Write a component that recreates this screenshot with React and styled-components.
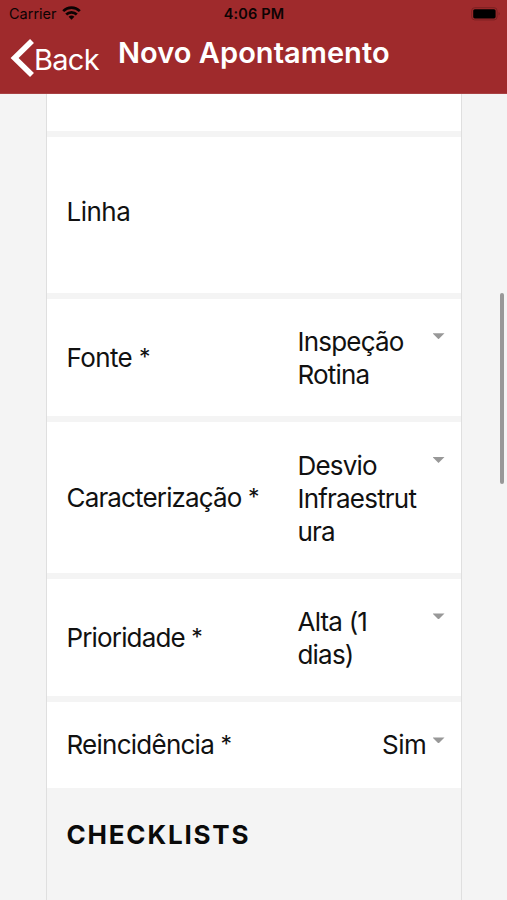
import styled, { createGlobalStyle } from "styled-components";

const fields = [
  { label: "Fonte", value: "Inspeção Rotina", height: 117.4, tracking: -0.6 },
  { label: "Caracterização", value: "Desvio Infraestrutura", height: 151, tracking: -0.85 },
  { label: "Prioridade", value: "Alta (1 dias)", height: 117, tracking: -0.85 },
];

const App = () => {
  return (
    <>
      <GlobalStyle />
      <Screen>
        <Header>
          <StatusBar>
            <Carrier>
              <span>Carrier</span>
              <WifiIcon />
            </Carrier>
            <Clock>4:06 PM</Clock>
            <Battery>
              <BatteryIcon />
            </Battery>
          </StatusBar>
          <NavBar>
            <BackButton type="button">
              <BackIcon />
              <span>Back</span>
            </BackButton>
            <Title>Novo Apontamento</Title>
          </NavBar>
        </Header>
        <Content>
          <Panel>
            <Row $height={37} />
            <Row $height={155.6} $bottom={7}>
              <Label>Linha</Label>
            </Row>
            {fields.map((field) => (
              <Row key={field.label} $height={field.height}>
                <Label $tracking={field.tracking}>
                  {field.label} <Required>*</Required>
                </Label>
                <Select>
                  <Value>{field.value}</Value>
                  <Arrow />
                </Select>
              </Row>
            ))}
            <Row $height={86}>
              <Label $tracking={-0.75}>
                Reincidência <Required>*</Required>
              </Label>
              <Select $compact>
                <Value $compact>Sim</Value>
                <Arrow />
              </Select>
            </Row>
            <SectionTitle>CHECKLISTS</SectionTitle>
          </Panel>
          <ScrollThumb />
        </Content>
      </Screen>
    </>
  );
};

export default App;

const WifiIcon = () => (
  <svg width="19" height="14" viewBox="0 0 19 14">
    <g fill="none" stroke="#0c0303" strokeWidth="2.7">
      <path d="M1.2 5.1a11.8 11.8 0 0 1 16.6 0" />
      <path d="M4.2 8.5a7.5 7.5 0 0 1 10.6 0" />
    </g>
    <path d="M6.6 10.8a4.2 4.2 0 0 1 5.8 0L9.5 13.8z" fill="#0c0303" />
  </svg>
);

const BatteryIcon = () => (
  <svg width="30" height="14" viewBox="0 0 30 14">
    <rect x="0.7" y="0.7" width="25.4" height="12.2" rx="3" fill="none" stroke="#7c2022" />
    <rect x="2.2" y="2.2" width="22.4" height="9.2" rx="1.6" fill="#000" />
    <path d="M27.6 5a2 2 0 0 1 0 3.6z" fill="#7c2022" />
  </svg>
);

const BackIcon = () => (
  <svg width="24" height="40" viewBox="0 0 24 40">
    <path d="M22 3L4.6 20 22 37" fill="none" stroke="#fff" strokeWidth="5.6" />
  </svg>
);

const GlobalStyle = createGlobalStyle`
  * {
    box-sizing: border-box;
  }
  body {
    margin: 0;
    background: #f4f4f4;
    font-family: Inter, "Liberation Sans", sans-serif;
  }
`;

const Screen = styled.div`
  height: 900px;
  display: flex;
  flex-direction: column;
  overflow: hidden;
`;

const Header = styled.header`
  flex: none;
  height: 94px;
  background: #9f2a2c;
  border-bottom: 1px solid #a84143;
`;

const StatusBar = styled.div`
  display: grid;
  grid-template-columns: 1fr auto 1fr;
  align-items: center;
  height: 27px;
  padding: 0 5px 0 9px;
  color: #0c0303;
`;

const Carrier = styled.div`
  display: flex;
  align-items: center;
  gap: 5px;
  font-size: 14.5px;
  letter-spacing: 0;
  svg {
    margin-top: -2px;
  }
`;

const Clock = styled.span`
  margin-left: -3px;
  font-size: 14.5px;
  font-weight: 600;
  letter-spacing: 0.15px;
`;

const Battery = styled.div`
  display: flex;
  justify-content: flex-end;
  margin-right: 1px;
`;

const NavBar = styled.div`
  display: flex;
  align-items: flex-start;
  padding-left: 10px;
`;

const BackButton = styled.button`
  display: flex;
  align-items: center;
  width: 108px;
  height: 40px;
  margin-top: 11px;
  padding: 0;
  border: 0;
  background: none;
  color: #fff;
  font-family: inherit;
  font-size: 29px;
  letter-spacing: -0.7px;
  span {
    margin-top: 3px;
  }
`;

const Title = styled.h1`
  margin: 8px 0 0;
  color: #fff;
  font-size: 29px;
  font-weight: 600;
  line-height: 36px;
  letter-spacing: 0.05px;
  white-space: nowrap;
`;

const Content = styled.main`
  position: relative;
  flex: 1;
  display: flex;
  justify-content: center;
`;

const Panel = styled.div`
  display: flex;
  flex-direction: column;
  gap: 6px;
  width: 416px;
  border: solid #dfdfdf;
  border-width: 0 1px;
`;

const Row = styled.div`
  flex: none;
  display: flex;
  align-items: center;
  justify-content: space-between;
  height: ${({ $height }) => $height}px;
  padding: 0 16px ${({ $bottom = 0 }) => $bottom}px 20px;
  background: #fff;
`;

const Label = styled.span`
  color: #111;
  font-size: 26px;
  line-height: 33px;
  letter-spacing: ${({ $tracking = -0.5 }) => $tracking}px;
  white-space: nowrap;
`;

const Required = styled.span`
  position: relative;
  top: -2px;
  font-size: 23px;
  line-height: 1;
`;

const Select = styled.div`
  display: flex;
  justify-content: space-between;
  width: ${({ $compact }) => ($compact ? "auto" : "147px")};
  gap: ${({ $compact }) => ($compact ? "6px" : "0")};
`;

const Value = styled.span`
  width: ${({ $compact }) => ($compact ? "auto" : "122px")};
  margin: ${({ $compact }) => ($compact ? "0" : "1px 0 -1px")};
  color: #111;
  font-size: 26px;
  line-height: 33px;
  letter-spacing: ${({ $compact }) => ($compact ? "-0.4px" : "-0.8px")};
  overflow-wrap: anywhere;
`;

const Arrow = styled.span`
  flex: none;
  margin-top: 9px;
  width: 12px;
  height: 6px;
  background: #989898;
  clip-path: polygon(0 0, 100% 0, 50% 100%);
`;

const SectionTitle = styled.h2`
  margin: 24px 0 0 20px;
  color: #0a0a0a;
  font-size: 26px;
  font-weight: 700;
  line-height: 34px;
  letter-spacing: 1.8px;
`;

const ScrollThumb = styled.div`
  position: absolute;
  top: 199px;
  right: 3px;
  width: 4px;
  height: 191px;
  border-radius: 2px;
  background: #989898;
`;
